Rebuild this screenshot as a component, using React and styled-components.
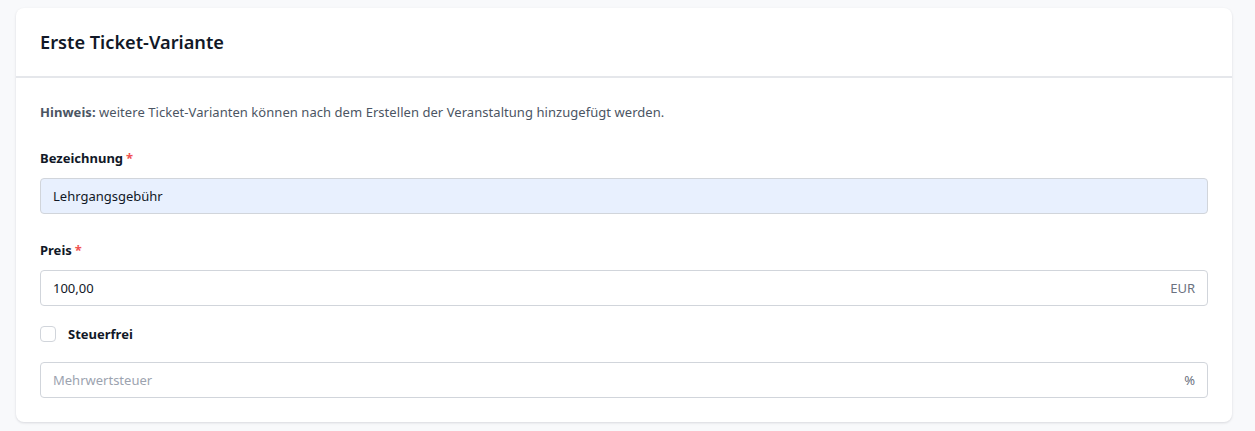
import styled, { createGlobalStyle } from 'styled-components';

const GlobalStyle = createGlobalStyle`
  html, body {
    margin: 0;
    padding: 0;
    background: #f8f9fb;
    font-family: 'Noto Sans', 'Open Sans', sans-serif;
  }
  * { box-sizing: border-box; }
`;

const Page = styled.div`
  padding: 8px 23px 9px 16px;
  min-height: 431px;
`;

const Card = styled.section`
  background: #fff;
  border-radius: 8px;
  box-shadow: 0 1px 3px rgba(17, 24, 39, 0.1), 0 1px 2px rgba(17, 24, 39, 0.04);
`;

const CardHeader = styled.header`
  height: 70px;
  padding: 0 24px;
  display: flex;
  align-items: center;
  border-bottom: 2px solid #e5e7eb;
`;

const Title = styled.h2`
  margin: 0;
  font-size: 18.2px;
  font-weight: 600;
  color: #111827;
`;

const CardBody = styled.div`
  padding: 24px;
  display: flex;
  flex-direction: column;
`;

const Hint = styled.p`
  margin: 0 0 26px;
  font-size: 13px;
  line-height: 20px;
  color: #4b5563;
  letter-spacing: 0.05px;
  strong { font-weight: 700; }
`;

const Field = styled.div`
  display: flex;
  flex-direction: column;
  gap: 10px;
  margin-bottom: ${(p) => p.$gap || 0}px;
`;

const Label = styled.label`
  font-size: 13px;
  line-height: 20px;
  font-weight: 700;
  color: #111827;
`;

const Required = styled.span`
  color: #f05252;
  margin-left: 3px;
`;

const InputWrap = styled.div`
  height: 36px;
  display: flex;
  align-items: center;
  border: 1px solid #d1d5db;
  border-radius: 4px;
  padding: 0 12px;
  background: ${(p) => (p.$filled ? '#e8f0fe' : '#fff')};
`;

const Input = styled.input`
  flex: 1;
  border: none;
  outline: none;
  background: transparent;
  font-family: inherit;
  font-size: 13px;
  color: #111827;
  padding: 0;
  &::placeholder { color: #9ca3af; }
`;

const Suffix = styled.span`
  font-size: 13px;
  color: #6b7280;
`;

const CheckRow = styled.label`
  display: flex;
  align-items: center;
  gap: 12px;
  height: 20px;
  margin: 18px 0;
  font-size: 13px;
  font-weight: 700;
  color: #111827;
`;

const Box = styled.span`
  width: 16px;
  height: 16px;
  border: 1px solid #d1d5db;
  border-radius: 4px;
  background: #fff;
`;

export default function App() {
  return (
    <>
      <GlobalStyle />
      <Page>
        <Card>
          <CardHeader>
            <Title>Erste Ticket-Variante</Title>
          </CardHeader>
          <CardBody>
            <Hint>
              <strong>Hinweis:</strong> weitere Ticket-Varianten können nach dem Erstellen der Veranstaltung hinzugefügt werden.
            </Hint>
            <Field $gap={26}>
              <Label>Bezeichnung<Required>*</Required></Label>
              <InputWrap $filled>
                <Input defaultValue="Lehrgangsgebühr" />
              </InputWrap>
            </Field>
            <Field>
              <Label>Preis<Required>*</Required></Label>
              <InputWrap>
                <Input defaultValue="100,00" />
                <Suffix>EUR</Suffix>
              </InputWrap>
            </Field>
            <CheckRow>
              <Box />
              Steuerfrei
            </CheckRow>
            <InputWrap>
              <Input placeholder="Mehrwertsteuer" />
              <Suffix>%</Suffix>
            </InputWrap>
          </CardBody>
        </Card>
      </Page>
    </>
  );
}
